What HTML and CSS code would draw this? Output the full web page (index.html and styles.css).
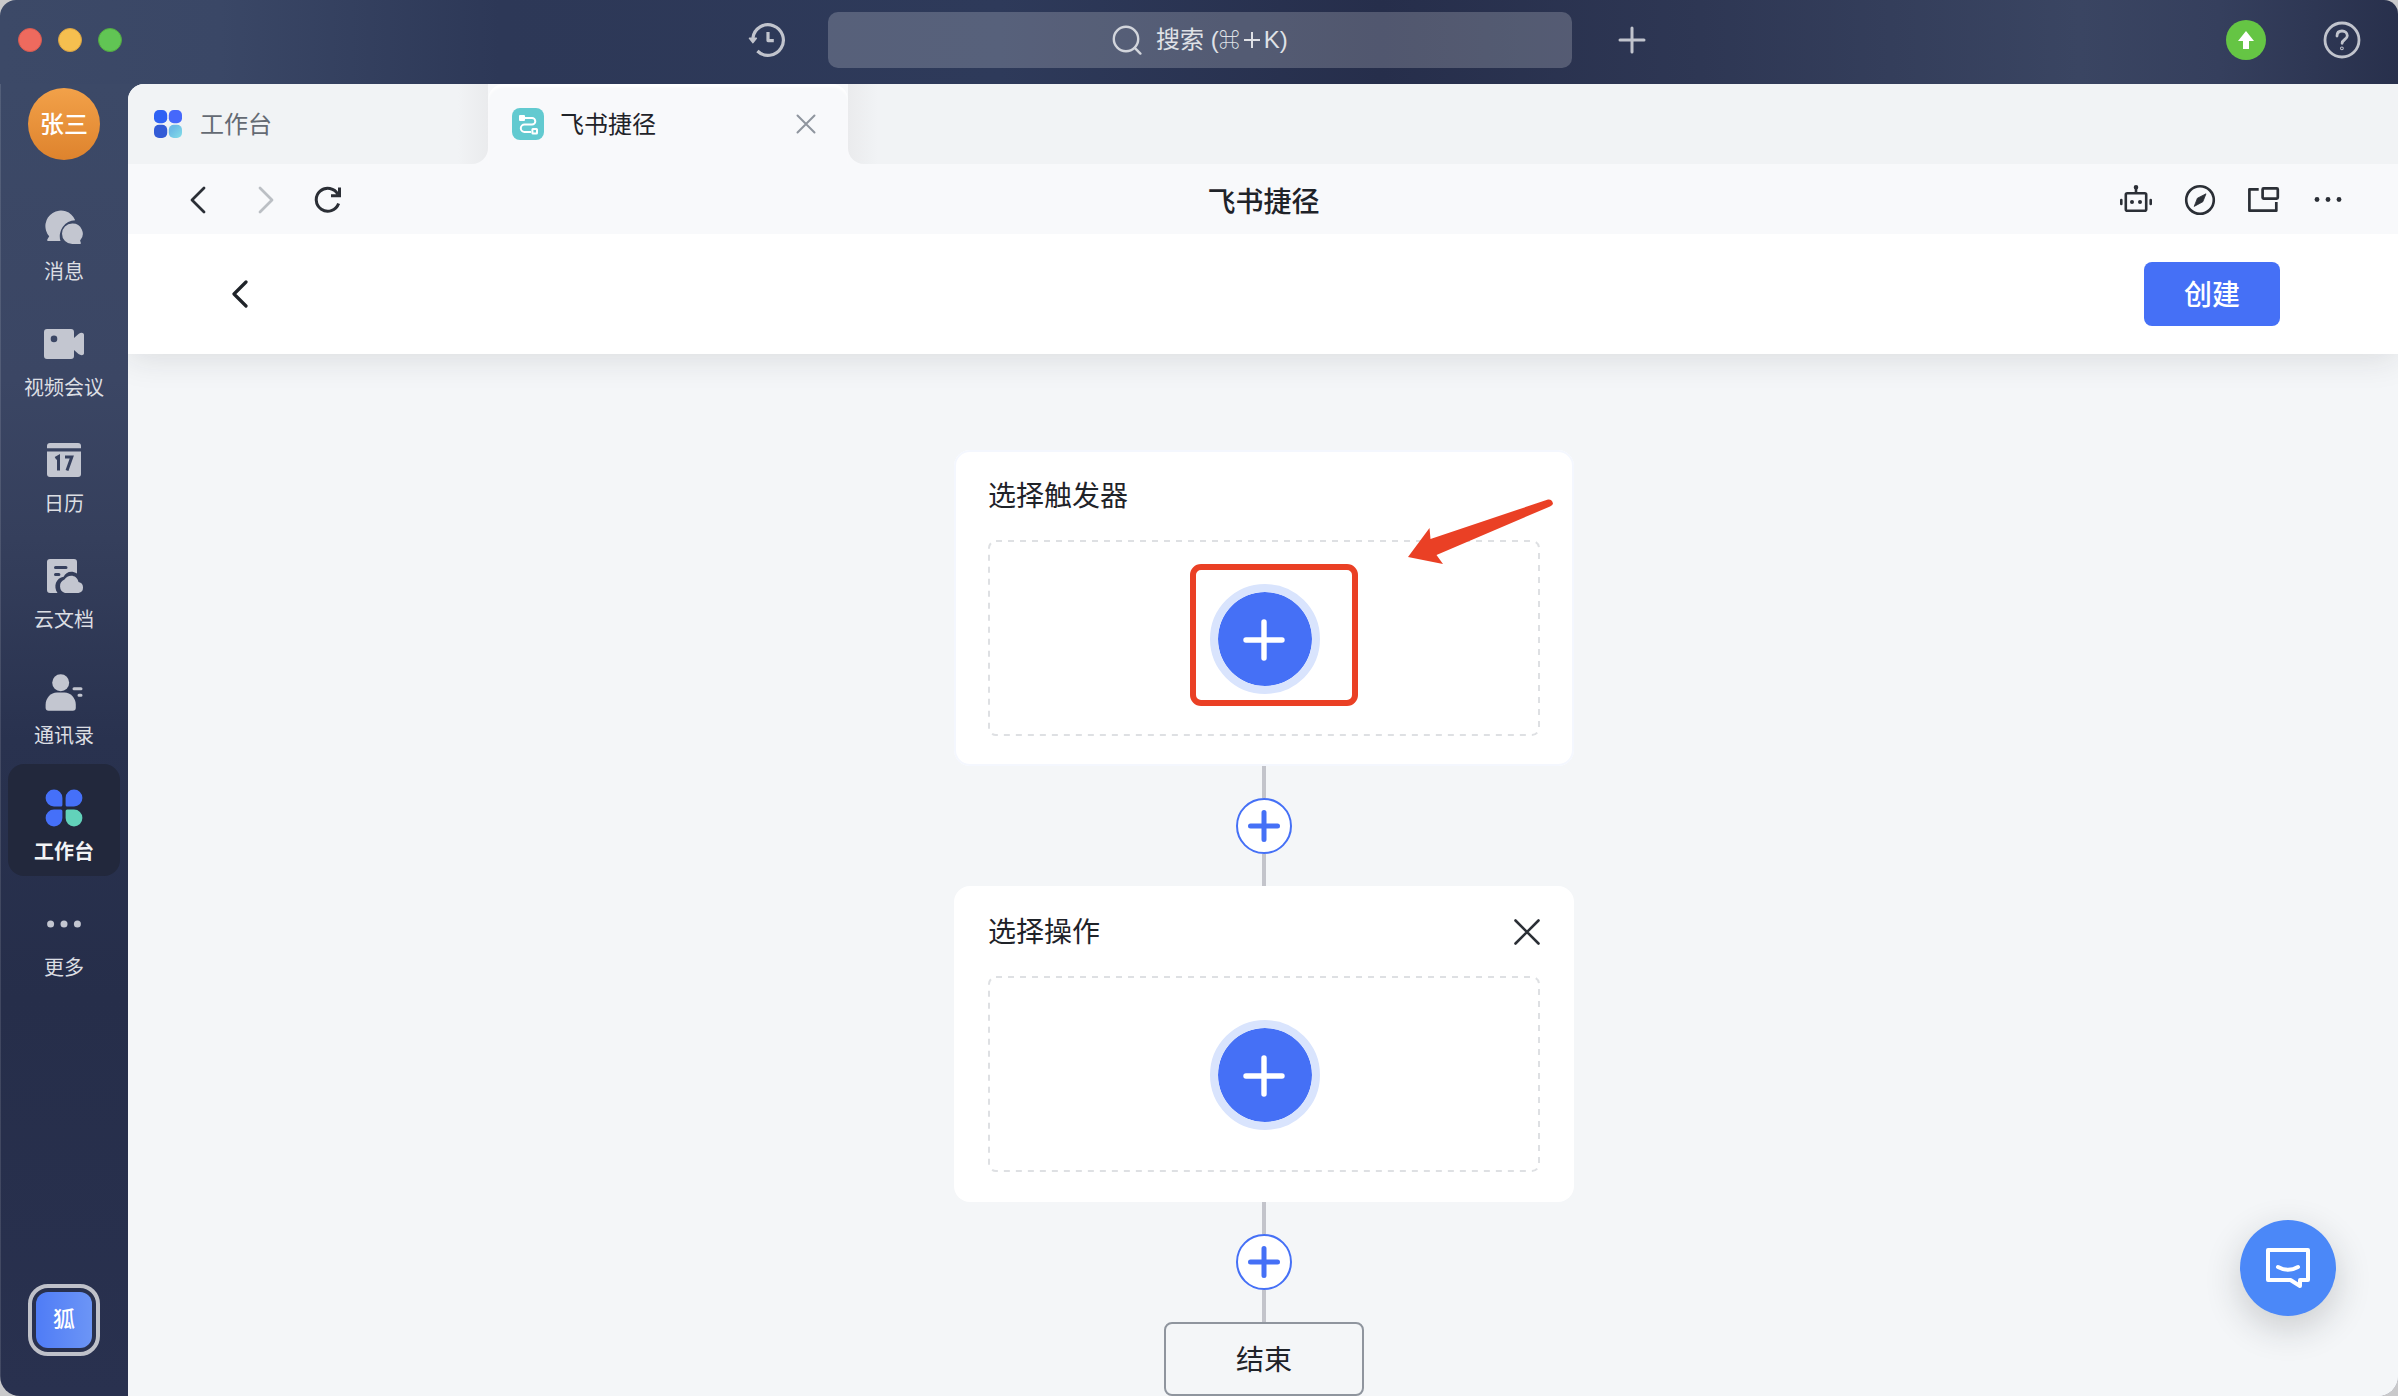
FILE: index.html
```html
<!DOCTYPE html>
<html lang="zh-CN">
<head>
<meta charset="utf-8">
<title>飞书捷径</title>
<link rel="stylesheet" href="styles.css">
</head>
<body>
<div class="window">
  <header class="topbar">
    <div class="lights"><i class="light red"></i><i class="light yellow"></i><i class="light green"></i></div>
    <svg class="history" width="40" height="40" viewBox="0 0 40 40" fill="none" stroke="#c1c4cd" stroke-width="3.2">
      <path d="M5.900 18A15.300 15.300 0 1 1 10.400 31"/>
      <path d="M21 12v8.600h5.800" stroke-linejoin="round"/>
      <path d="M2.500 18.300h6.800L5.900 22.600z" fill="#c1c4cd" stroke-width="1.600" stroke-linejoin="round"/>
    </svg>
    <div class="search">
      <svg width="30" height="30" viewBox="0 0 30 30" fill="none" stroke="#d2d5dc" stroke-width="2.400" stroke-linecap="round"><circle cx="14" cy="14" r="12.200"/><path d="M23 23.200l5.400 5.400"/></svg>
      <span class="search-text">搜索 (<span class="cmd">⌘</span><svg class="key-plus" width="16" height="16" viewBox="0 0 16 16" stroke="#dfe1e6" stroke-width="2"><path d="M0 8h16M8 0v16"/></svg>K)</span>
    </div>
    <svg class="add" width="28" height="28" viewBox="0 0 28 28" stroke="#c1c4cd" stroke-width="3" stroke-linecap="round"><path d="M2 14h24M14 2v24"/></svg>
    <div class="top-right">
      <svg width="40" height="40" viewBox="0 0 40 40"><circle cx="20" cy="20" r="20" fill="#65c544"/><path d="M20 11l8 10h-5v8h-6v-8h-5z" fill="#fff"/></svg>
      <svg width="38" height="38" viewBox="0 0 38 38" fill="none" stroke="#c1c4cd" stroke-width="2.800" stroke-linecap="round"><circle cx="19" cy="19" r="17"/><path d="M14 15c0-3.200 2-5 5-5s5.300 1.800 5.300 4.800c0 3.800-5.200 3.600-5.200 7.500"/><circle cx="18.900" cy="27.300" r=".5"/></svg>
    </div>
  </header>

  <aside class="sidebar">
    <div class="avatar">张三</div>
    <nav class="menu">
      <a class="item">
        <svg width="40" height="40" viewBox="0 0 40 40" fill="#c3c6d0"><path d="M31.200 12.200A15.500 15.500 0 1 0 5.200 28.300L3.300 31.500q-.6 1.500.8 1.500H16.500A16 16 0 0 1 31.200 12.200z"/><path d="M28.200 15.600a10.100 10.100 0 1 0 0 20.400H36q1.400-.2.700-1.500l-.6-2A10.100 10.100 0 0 0 28.200 15.600z"/></svg>
        <span>消息</span></a>
      <a class="item">
        <svg width="40" height="40" viewBox="0 0 40 40" fill="#c3c6d0"><path fill-rule="evenodd" d="M3 5h24q3 0 3 3v24q0 3-3 3H3q-3 0-3-3V8q0-3 3-3zm7 6.600a3.300 3.300 0 1 0 0 6.600a3.300 3.300 0 1 0 0-6.600z"/><path d="M30 14l4.500-4q3-2 5-.5.500.5.500 1.500v18q0 1-.5 1.500-2 1.500-5-.5L30 26z"/></svg>
        <span>视频会议</span></a>
      <a class="item">
        <svg width="40" height="40" viewBox="0 0 40 40" fill="#c3c6d0"><path d="M3 8.300V6q0-3 3-3h28q3 0 3 3v2.300z"/><path d="M3 11.600h34V34q0 3-3 3H6q-3 0-3-3z"/><path d="M11.500 18.400l3-1.800V30.400M21 16.900h6.800L23 30.400" fill="none" stroke="#36405e" stroke-width="3"/></svg>
        <span>日历</span></a>
      <a class="item">
        <svg width="40" height="40" viewBox="0 0 40 40" fill="#c3c6d0"><path d="M6 3h24q3 0 3 3v11.500C27 14 21.500 16.500 19.700 20.700 12 22 9 30 13.500 37H6q-3 0-3-3V6q0-3 3-3z"/><path d="M11.500 11.600h10.500M11.500 18.400h3.400" stroke="#36405e" stroke-width="3" stroke-linecap="round"/><path d="M21 37a7.200 7.200 0 0 1-.5-13.500c3-5.500 12.500-5.500 14 2.500a5.600 5.600 0 0 1 0 11z"/></svg>
        <span>云文档</span></a>
      <a class="item">
        <svg width="40" height="40" viewBox="0 0 40 40" fill="#c3c6d0"><circle cx="16.700" cy="10.700" r="8.500"/><path d="M1.600 35.700q0 3 3 3h24.200q3 0 3-3v-3C31.800 26 26.500 20.500 20.500 20.500h-7.600C6.900 20.500 1.600 26 1.600 32.700z"/><path d="M30 16.700h7M35 23.300h2" stroke="#c3c6d0" stroke-width="3" stroke-linecap="round"/></svg>
        <span>通讯录</span></a>
      <a class="item active">
        <svg width="40" height="40" viewBox="0 0 40 40" fill="#4570f9"><path d="M10 1.600a8.400 8.400 0 0 1 8.400 8.400v6.900q0 1.500-1.500 1.500H10a8.400 8.400 0 0 1 0-16.800z"/><path d="M30 1.600a8.400 8.400 0 0 1 0 16.800h-6.900q-1.500 0-1.500-1.500V10A8.400 8.400 0 0 1 30 1.600z"/><path d="M10 21.600h6.900q1.500 0 1.500 1.500V30A8.400 8.400 0 1 1 10 21.600z"/><path d="M30 21.600A8.400 8.400 0 1 1 21.600 30v-6.900q0-1.500 1.500-1.500z" fill="#62d2ba"/></svg>
        <span>工作台</span></a>
      <a class="item">
        <svg width="40" height="40" viewBox="0 0 40 40" fill="#c3c6d0"><circle cx="6.600" cy="20" r="3.500"/><circle cx="20" cy="20" r="3.500"/><circle cx="33.400" cy="20" r="3.500"/></svg>
        <span>更多</span></a>
    </nav>
    <div class="team"><span>狐</span></div>
  </aside>

  <main class="main">
    <div class="tabs">
      <div class="tab">
        <svg width="28" height="28" viewBox="0 0 28 28"><defs><linearGradient id="teal" x2="1" y2="1"><stop offset=".3" stop-color="#6cbbe6"/><stop offset="1" stop-color="#84dfe8"/></linearGradient></defs><rect width="13.200" height="13.200" rx="5" fill="#2f62f4"/><rect x="14.800" width="13.200" height="13.200" rx="5" fill="#4668fb"/><rect y="14.800" width="13.200" height="13.200" rx="5" fill="#335bd6"/><rect x="14.800" y="14.800" width="13.200" height="13.200" rx="5" fill="url(#teal)"/></svg>
        <span>工作台</span>
      </div>
      <div class="tab current">
        <svg width="32" height="32" viewBox="0 0 32 32"><rect width="32" height="32" rx="8" fill="#62cad0"/><g fill="none" stroke="#fff" stroke-width="2"><path d="M12 10h8a3.300 3.300 0 0 1 0 6.600h-7.500a3.700 3.700 0 0 0 0 7.400H19"/><rect x="20.400" y="21" width="4.600" height="4.600" rx=".5"/></g><rect x="7" y="7" width="6" height="6" rx="1" fill="#fff"/></svg>
        <span>飞书捷径</span>
        <svg class="tab-close" width="20" height="20" viewBox="0 0 20 20" stroke="#8f959e" stroke-width="2" stroke-linecap="round"><path d="M1.500 1.500l17 17M18.500 1.500l-17 17"/></svg>
      </div>
      <div class="tabs-rest"></div>
    </div>

    <div class="nav">
      <div class="nav-side">
        <svg width="16" height="28" viewBox="0 0 16 28" fill="none" stroke="#2b2f36" stroke-width="2.800" stroke-linecap="round" stroke-linejoin="round"><path d="M14 2L2 14l12 12"/></svg>
        <svg class="forward" width="16" height="28" viewBox="0 0 16 28" fill="none" stroke="#bbbfc4" stroke-width="2.800" stroke-linecap="round" stroke-linejoin="round"><path d="M2 2l12 12L2 26"/></svg>
        <svg class="reload" width="28" height="28" viewBox="0 0 28 28" fill="none" stroke="#2b2f36" stroke-width="3"><path d="M24.600 17.500A11.500 11.500 0 1 1 24 8.500"/><path d="M25.500 1.500v8.200H17"/></svg>
      </div>
      <h1>飞书捷径</h1>
      <div class="nav-side tools">
        <svg width="32" height="32" viewBox="0 0 32 32" fill="none" stroke="#2b2f36" stroke-width="2.600"><rect x="5.800" y="9.300" width="20.400" height="17.400" rx="1.500"/><path d="M16 9V3"/><circle cx="16" cy="3.300" r="1.400" fill="#2b2f36" stroke-width="1.800"/><path d="M1.300 16v4M30.700 16v4" stroke-linecap="round"/><g fill="#2b2f36" stroke="none"><circle cx="12" cy="18" r="2"/><circle cx="20" cy="18" r="2"/></g></svg>
        <svg width="32" height="32" viewBox="0 0 32 32" fill="none" stroke="#2b2f36" stroke-width="2.600"><circle cx="16" cy="16" r="13.800"/><path d="M22 9.800l-3.200 8-8.600 4.600 3.200-8.200z" fill="#2b2f36" stroke-width=".8" stroke-linejoin="round"/></svg>
        <svg width="32" height="32" viewBox="0 0 32 32" fill="none" stroke="#2b2f36" stroke-width="2.700" stroke-linejoin="round"><path d="M10.700 5.300H1.400v21.400h26.900V18"/><rect x="14.600" y="4.400" width="15.200" height="10.200" rx="1"/></svg>
        <svg width="32" height="32" viewBox="0 0 32 32" fill="#2b2f36"><circle cx="5" cy="15.500" r="2.400"/><circle cx="16" cy="15.500" r="2.400"/><circle cx="27" cy="15.500" r="2.400"/></svg>
      </div>
    </div>

    <div class="page-head">
      <svg width="18" height="28" viewBox="0 0 18 28" fill="none" stroke="#1f2329" stroke-width="3.200" stroke-linecap="round" stroke-linejoin="round"><path d="M15 2L3 14l12 12"/></svg>
      <button class="create">创建</button>
    </div>

    <div class="canvas">
      <section class="card outlined">
        <div class="card-head"><h2>选择触发器</h2></div>
        <div class="drop">
          <svg class="dashes" width="552" height="196"><rect x="1" y="1" width="550" height="194" rx="7"/></svg>
          <button class="big-add"><svg width="44" height="44" viewBox="0 0 44 44" stroke="#fff" stroke-width="5.400" stroke-linecap="round"><path d="M4 22h36M22 4v36"/></svg></button>
          <div class="mark"></div>
        </div>
        <svg class="arrow" width="150" height="70" viewBox="0 0 150 70" fill="#ea4025"><path d="M0 59L21.500 30 22.500 41 140 1.500Q144 1 145 5.500 145 7 142 8.500L28.500 57 35 66z"/></svg>
      </section>
      <div class="link"><i></i><button class="small-add"><svg width="32" height="32" viewBox="0 0 32 32" stroke="#4570f6" stroke-width="5" stroke-linecap="round"><path d="M2.500 16h27M16 2.500v27"/></svg></button><i></i></div>
      <section class="card">
        <div class="card-head"><h2>选择操作</h2>
          <svg class="card-close" width="28" height="28" viewBox="0 0 28 28" stroke="#2b2f36" stroke-width="2.600" stroke-linecap="round"><path d="M2.500 2.500l23 23M25.500 2.500l-23 23"/></svg>
        </div>
        <div class="drop">
          <svg class="dashes" width="552" height="196"><rect x="1" y="1" width="550" height="194" rx="7"/></svg>
          <button class="big-add"><svg width="44" height="44" viewBox="0 0 44 44" stroke="#fff" stroke-width="5.400" stroke-linecap="round"><path d="M4 22h36M22 4v36"/></svg></button>
        </div>
      </section>
      <div class="link"><i></i><button class="small-add"><svg width="32" height="32" viewBox="0 0 32 32" stroke="#4570f6" stroke-width="5" stroke-linecap="round"><path d="M2.500 16h27M16 2.500v27"/></svg></button><i></i></div>
      <div class="end">结束</div>
    </div>
  </main>

  <button class="chat">
    <svg width="48" height="48" viewBox="0 0 48 48" fill="none" stroke="#fff" stroke-width="4" stroke-linecap="round" stroke-linejoin="round"><path d="M26.500 36H4V6h40v30h-8v6z"/><path d="M14 23q10 5.600 20 0"/></svg>
  </button>
</div>
</body>
</html>
```
FILE: styles.css
```css
* { box-sizing: border-box; }

body {
  margin: 0;
  background: #c9c9cb;
  color: #1f2329;
  font-family: "Liberation Sans", "Noto Sans CJK SC", sans-serif;
}

h1, h2 { margin: 0; font-weight: 400; }
svg { display: block; flex: none; }
button { border: 0; padding: 0; font: inherit; }

.window {
  position: relative;
  width: 2398px;
  height: 1396px;
  overflow: hidden;
  border-radius: 16px 14px 20px 20px;
  display: grid;
  grid-template: 84px 1fr / 128px 1fr;
  background:
    linear-gradient(90deg, #3c4967 0, #3a4766 220px, #2d3857 500px, #2e3a5a 1000px, #262e4b 1380px, #2e3754 1700px, #3a4562 2080px, #353f5d 2220px, #28304c 2398px) 0 0 / 100% 84px no-repeat,
    linear-gradient(180deg, #3c4967 84px, #3b4664 380px, #353f5c 540px, #29324f 740px, #262e4a 1000px, #29314f 1396px);
}

/* top bar */
.topbar {
  grid-column: 1 / -1;
  display: flex;
  align-items: center;
  height: 80px;
  padding: 0 37px 0 18px;
}
.lights { display: flex; gap: 16px; }
.light { width: 24px; height: 24px; border-radius: 50%; }
.red { background: #ee6a5e; border: 1px solid #d65a50; }
.yellow { background: #f5bf4f; border: 1px solid #d8a243; }
.green { background: #61c554; border: 1px solid #52a842; }
.history { margin-left: 625px; }
.search {
  display: flex;
  align-items: center;
  width: 744px;
  height: 56px;
  margin-left: 41px;
  padding-left: 284px;
  gap: 14px;
  border-radius: 10px;
  background: rgba(255, 255, 255, .2);
}
.search-text {
  display: flex;
  align-items: center;
  color: #dfe1e6;
  font-size: 24px;
  line-height: 32px;
  white-space: pre;
}
.cmd { width: 20px; font-size: 21px; font-weight: 700; }
.key-plus { margin: 0 4px 0 5px; }
.add { margin-left: 46px; }
.top-right { display: flex; align-items: center; gap: 57px; margin-left: auto; }

/* sidebar */
.sidebar {
  display: flex;
  flex-direction: column;
  align-items: center;
  padding: 4px 1px 40px 0;
  border-left: 1px solid rgba(255, 255, 255, .12);
}
.avatar {
  width: 72px;
  height: 72px;
  border-radius: 50%;
  background: linear-gradient(#f2a149, #de832d);
  color: #fff;
  font-size: 24px;
  font-weight: 500;
  line-height: 73px;
  text-align: center;
}
.menu { display: flex; flex-direction: column; gap: 4px; margin-top: 24px; }
.item {
  display: flex;
  flex-direction: column;
  align-items: center;
  width: 112px;
  height: 112px;
  padding-top: 24px;
  border-radius: 16px;
  color: #dcdee3;
  font-size: 20px;
  line-height: 28px;
}
.item span { margin-top: 10px; }
.item.active { background: #22283c; color: #f2f3f5; font-weight: 700; }
.team {
  width: 72px;
  height: 72px;
  margin-top: auto;
  padding: 4px;
  border: 4px solid #bfc1c9;
  border-radius: 20px;
}
.team span {
  display: block;
  height: 56px;
  border-radius: 12px;
  background: linear-gradient(90deg, #4f7cf6, #6c95f6);
  color: #fff;
  font-size: 22px;
  font-weight: 500;
  line-height: 56px;
  text-align: center;
}

/* main column */
.main {
  display: flex;
  flex-direction: column;
  min-width: 0;
  border-radius: 16px 0 0 0;
  overflow: hidden;
  background: #f8f9fb;
}
.tabs { display: flex; height: 80px; }
.tab {
  display: flex;
  align-items: center;
  width: 360px;
  padding-left: 26px;
  gap: 18px;
  border-bottom-right-radius: 16px;
  background: linear-gradient(90deg, #f1f3f5 330px, #eaebed 360px);
  color: #646a73;
  font-size: 24px;
}
.tab span { padding-bottom: 3px; }
.tab.current {
  padding: 0 32px 0 24px;
  gap: 16px;
  background: #f8f9fb;
  color: #1f2329;
  border-radius: 16px 16px 0 0;
  box-shadow: inset 0 4px 3px -1px #fff;
}
.tab-close { margin-left: auto; }
.tabs-rest {
  flex: 1;
  border-bottom-left-radius: 16px;
  background: linear-gradient(90deg, #eaebed 0, #f1f3f5 30px);
}

.nav {
  position: relative;
  z-index: 1;
  display: flex;
  align-items: center;
  justify-content: space-between;
  height: 70px;
  padding: 2px 54px 0 62px;
  background: #f8f9fb;
}
.nav-side { display: flex; align-items: center; width: 224px; }
.forward { margin-left: 52px; }
.reload { margin-left: 40px; }
.tools { gap: 32px; }
.nav h1 { font-size: 28px; font-weight: 500; padding: 0 7px 1px 0; }

.page-head {
  position: relative;
  display: flex;
  align-items: center;
  justify-content: space-between;
  height: 120px;
  padding: 0 118px 0 103px;
  background: #fff;
  box-shadow: 0 4px 32px rgba(31, 35, 41, .12);
}
.create {
  width: 136px;
  height: 64px;
  padding-bottom: 3px;
  border-radius: 8px;
  background: #4570f6;
  color: #fff;
  font-size: 28px;
  font-weight: 500;
}

/* flow canvas */
.canvas {
  flex: 1;
  display: flex;
  flex-direction: column;
  align-items: center;
  padding: 96px 0 0 2px;
  background: #f4f6f8;
}
.card {
  position: relative;
  flex: none;
  width: 620px;
  height: 316px;
  padding: 24px 34px 0;
  border-radius: 16px;
  background: #fff;
}
.card.outlined { box-shadow: inset 0 0 0 2px #f4f7fe; }
.card-head { display: flex; align-items: center; justify-content: space-between; height: 44px; margin-bottom: 22px; }
.card-head h2 { padding-top: 2px; font-size: 28px; line-height: 44px; }
.card-close { margin-right: -1px; }
.drop {
  position: relative;
  display: flex;
  align-items: center;
  justify-content: center;
  height: 196px;
  padding: 2px 0 0 2px;
}
.dashes { position: absolute; inset: 0; fill: none; stroke: #dee0e3; stroke-width: 2; stroke-dasharray: 6 6; }
.big-add {
  display: flex;
  align-items: center;
  justify-content: center;
  width: 110px;
  height: 110px;
  border: 8px solid #d9e4fd;
  border-radius: 50%;
  background: #4570f6;
  background-clip: padding-box;
}
.big-add svg { margin: 1px 2px 0 0; }
.mark {
  position: absolute;
  left: 202px;
  top: 24px;
  width: 168px;
  height: 142px;
  border: 6px solid #ea4025;
  border-radius: 11px;
}
.arrow { position: absolute; left: 454px; top: 48px; }
.link { display: flex; flex-direction: column; align-items: center; }
.link i { width: 4px; height: 32px; background: #c3c4cb; }
.small-add {
  display: flex;
  align-items: center;
  justify-content: center;
  width: 56px;
  height: 56px;
  border: 2px solid #4570f6;
  border-radius: 50%;
  background: #fff;
}
.end {
  flex: none;
  width: 200px;
  height: 74px;
  border: 2px solid #8f959e;
  border-radius: 8px;
  font-size: 28px;
  line-height: 74px;
  text-align: center;
}

/* floating help button */
.chat {
  position: absolute;
  right: 62px;
  bottom: 80px;
  display: flex;
  align-items: center;
  justify-content: center;
  width: 96px;
  height: 96px;
  border-radius: 50%;
  background: #4b88f8;
  box-shadow: 0 12px 36px rgba(31, 35, 41, .2);
}
```
